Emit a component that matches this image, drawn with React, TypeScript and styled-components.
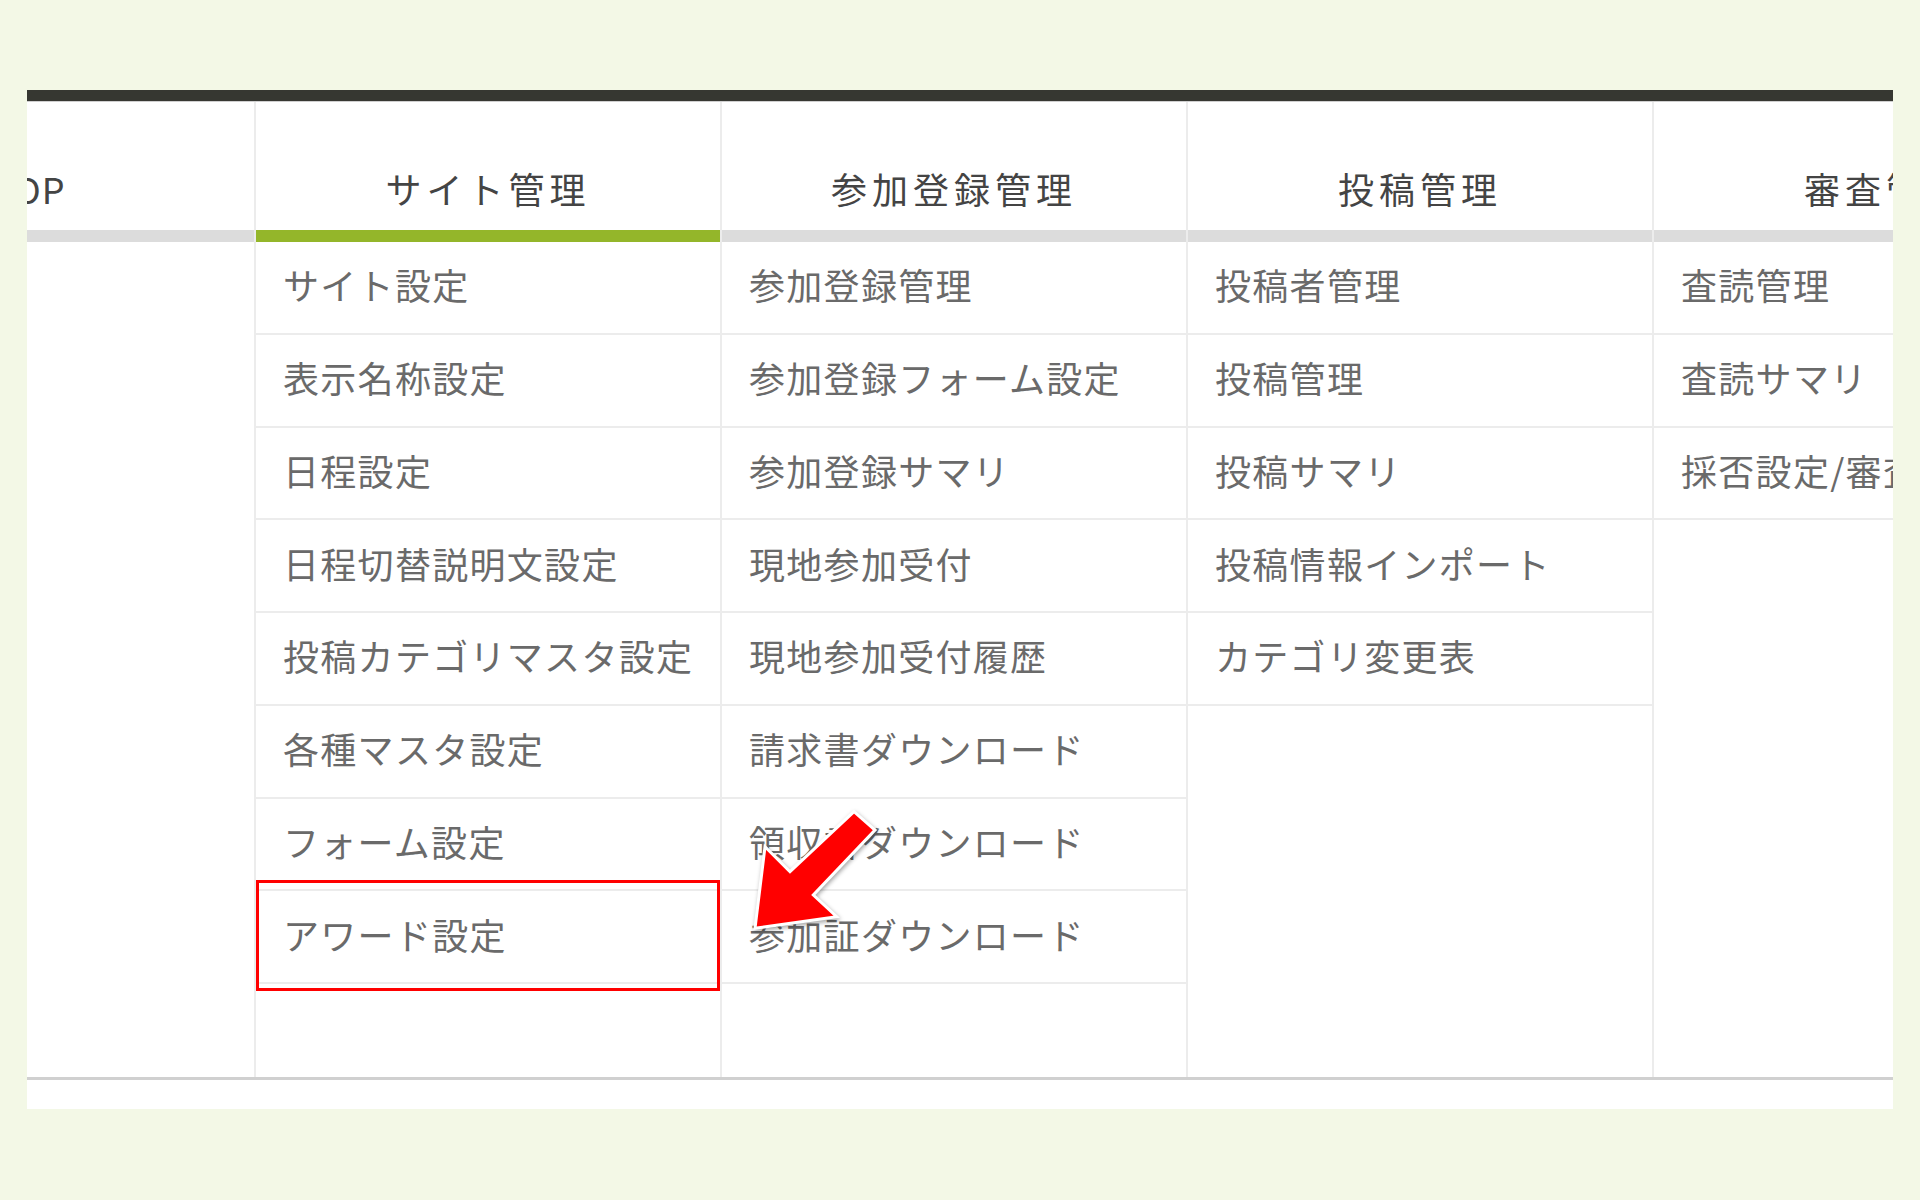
import { FC } from "react";
import styled, { createGlobalStyle } from "styled-components";

const GlobalStyle = createGlobalStyle`
  body {
    margin: 0;
    background: #f3f8e6;
    font-family: "Noto Sans CJK JP", "Noto Sans", sans-serif;
  }
`;

const Page = styled.div`
  padding: 90px 27px 0;
`;

const Panel = styled.div`
  position: relative;
  background: #fff;
  padding-bottom: 29px;
`;

const TopBar = styled.div`
  height: 11px;
  background: #363731;
  border-bottom: 1px solid #cfcfcf;
`;

const Viewport = styled.div`
  overflow: hidden;
  border-bottom: 3px solid #d0d0d0;
`;

const MenuRow = styled.div`
  display: flex;
  margin-left: -223px;
  height: 975px;
`;

const Column = styled.div<{ $width: number; $first?: boolean }>`
  flex: 0 0 ${(p) => p.$width}px;
  box-sizing: border-box;
  border-left: ${(p) => (p.$first ? "none" : "2px solid #ececec")};
  display: flex;
  flex-direction: column;
`;

const Header = styled.div<{ $tight?: boolean }>`
  height: 128px;
  box-sizing: border-box;
  padding-top: 43px;
  display: flex;
  align-items: center;
  justify-content: center;
  font-size: 36px;
  letter-spacing: ${(p) => (p.$tight ? "1px" : "5px")};
  color: #444;
  white-space: nowrap;
`;

const Bar = styled.div<{ $active?: boolean }>`
  height: 12px;
  background: ${(p) => (p.$active ? "#94b62a" : "#dcdcdc")};
`;

const Item = styled.div<{ $highlight?: boolean }>`
  position: relative;
  height: 92.75px;
  box-sizing: border-box;
  border-bottom: 2px solid #ececec;
  padding: 0 0 6px 27px;
  display: flex;
  align-items: center;
  font-size: 36px;
  letter-spacing: 1.3px;
  color: #6a6a6a;
  white-space: nowrap;

  ${(p) =>
    p.$highlight &&
    `
    &::after {
      content: "";
      position: absolute;
      top: -11px;
      bottom: -9px;
      left: 0;
      right: 0;
      border: 3px solid #ff0000;
      pointer-events: none;
    }
  `}
`;

const Arrow = styled.svg`
  position: absolute;
  left: 713px;
  top: 705px;
  width: 150px;
  height: 150px;
  overflow: visible;
  filter: drop-shadow(1px 2px 2px rgba(0, 0, 0, 0.35));
`;

interface MenuGroup {
  title: string;
  width: number;
  active?: boolean;
  items: string[];
}

const groups: MenuGroup[] = [
  { title: "TOP", width: 450, items: [] },
  {
    title: "サイト管理",
    width: 466,
    active: true,
    items: [
      "サイト設定",
      "表示名称設定",
      "日程設定",
      "日程切替説明文設定",
      "投稿カテゴリマスタ設定",
      "各種マスタ設定",
      "フォーム設定",
      "アワード設定",
    ],
  },
  {
    title: "参加登録管理",
    width: 466,
    items: [
      "参加登録管理",
      "参加登録フォーム設定",
      "参加登録サマリ",
      "現地参加受付",
      "現地参加受付履歴",
      "請求書ダウンロード",
      "領収書ダウンロード",
      "参加証ダウンロード",
    ],
  },
  {
    title: "投稿管理",
    width: 466,
    items: ["投稿者管理", "投稿管理", "投稿サマリ", "投稿情報インポート", "カテゴリ変更表"],
  },
  {
    title: "審査管理",
    width: 466,
    items: ["査読管理", "査読サマリ", "採否設定/審査結果設定"],
  },
];

const App: FC = () => {
  return (
    <Page>
      <GlobalStyle />
      <Panel>
        <TopBar />
        <Viewport>
          <MenuRow>
            {groups.map((g, i) => (
              <Column key={g.title} $width={g.width} $first={i === 0}>
                <Header $tight={i === 0}>{g.title}</Header>
                <Bar $active={g.active} />
                {g.items.map((item) => (
                  <Item key={item} $highlight={item === "アワード設定"}>
                    {item}
                  </Item>
                ))}
              </Column>
            ))}
          </MenuRow>
        </Viewport>
        <Arrow viewBox="0 0 150 150">
          <polygon
            points="114,16.7 50,76.7 25,51.7 15,133.3 96.7,121.7 73.3,100 135,35"
            fill="#ff0000"
            stroke="#ffffff"
            strokeWidth="3"
            strokeLinejoin="miter"
          />
        </Arrow>
      </Panel>
    </Page>
  );
};

export default App;
